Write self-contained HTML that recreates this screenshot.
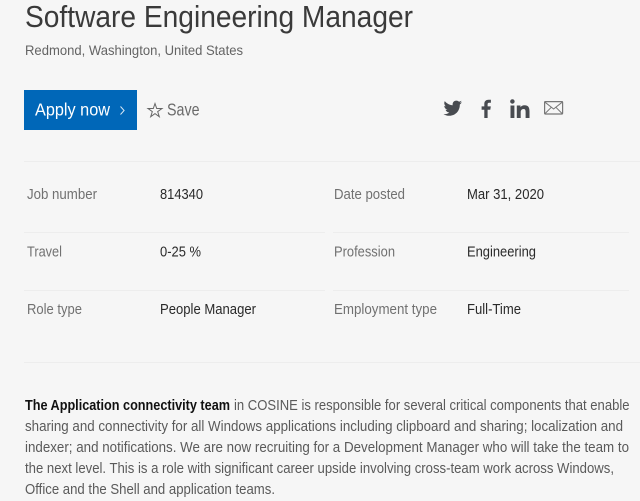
<!DOCTYPE html>
<html lang="en">
<head>
<meta charset="utf-8">
<title>Software Engineering Manager</title>
<style>
html,body{margin:0;padding:0;background:#f6f6f6;width:640px;height:501px;overflow:hidden}
svg{display:block;position:absolute;left:0;top:0}
text{font-family:"Liberation Sans",sans-serif;font-size:14.5px;fill:#5f5f5f}
.v{fill:#2a2a2a}
.l{fill:#717171}
.p{fill:#5a5a5a}
</style>
</head>
<body>
<svg width="640" height="501" viewBox="0 0 640 501" xmlns="http://www.w3.org/2000/svg">
<rect width="640" height="501" fill="#f6f6f6"/>

<text x="25" y="27" style="font-size:31px;fill:#3a3a3a" textLength="388" lengthAdjust="spacingAndGlyphs">Software Engineering Manager</text>
<text x="25" y="55" style="font-size:14px;fill:#646464" textLength="218" lengthAdjust="spacingAndGlyphs">Redmond, Washington, United States</text>

<rect x="24" y="90" width="113" height="40" fill="#0067b8"/>
<text x="35" y="115.500" style="font-size:17.500px;fill:#fff" textLength="75" lengthAdjust="spacingAndGlyphs">Apply now</text>
<path d="M120.500 106.500l3.600 4-3.600 4" fill="none" stroke="#d5e6f4" stroke-width="1"/>

<path d="M155 103.500l1.700 5h5.300l-4.300 3.100 1.600 5.100-4.300-3.100-4.300 3.100 1.600-5.100-4.300-3.100h5.300z" fill="none" stroke="#666" stroke-width="1"/>
<text x="167" y="115.500" style="font-size:17.500px;fill:#6a6a6a" textLength="32.500" lengthAdjust="spacingAndGlyphs">Save</text>

<path d="M462 102.300c-.7.300-1.400.5-2.200.6.800-.5 1.400-1.200 1.700-2.100-.8.400-1.600.8-2.500.9-1.600-1.700-4.500-1.400-5.800.5-.6.900-.7 2-.5 3-3.200-.2-6-1.700-7.900-4.100-1 1.800-.5 4 1.200 5.200-.6 0-1.200-.2-1.700-.5 0 1.900 1.300 3.500 3.100 3.900-.6.200-1.200.2-1.800.1.500 1.600 2 2.700 3.700 2.700-1.700 1.300-3.700 1.900-5.800 1.600 5.400 3.500 12.300 1.200 15-3.900.9-1.700 1.400-3.700 1.300-5.600.7-.6 1.500-1.400 2.200-2.300z" fill="#484b50"/>
<path d="M484.300 118v-8.300h-2.700v-3.300h2.700v-2.400c0-2.900 1.700-4.300 4.200-4.300 1.100 0 2.100.1 2.400.1v2.900h-1.700c-1.300 0-1.600.7-1.600 1.600v2.100h3.200l-.5 3.300h-2.700v8.300z" fill="#484b50"/>
<path d="M510.500 105.500h3.900v12.500h-3.900zM512.400 99.200a2.200 2.200 0 1 1 0 4.500a2.200 2.200 0 0 1 0-4.500zM516.800 105.500h3.700v1.700c.6-1.100 2-2 4-2 4.200 0 5 2.700 5 6.300v6.500h-3.900v-5.800c0-1.400 0-3.200-2-3.200s-2.900 1.500-2.900 3.100v5.900h-3.900z" fill="#484b50"/>
<g fill="none" stroke="#777" stroke-width="1.200">
<rect x="544.600" y="101.600" width="18" height="12.400" rx=".6"/>
<path d="M545 102.200l8.600 6.800 8.600-6.800M545 113.600l6.400-6.400M562.200 113.600l-6.400-6.400" stroke-width="1"/>
</g>

<g fill="#ededed">
<rect x="24" y="161" width="616" height="1"/>
<rect x="24" y="232" width="301" height="1"/>
<rect x="333" y="232" width="296" height="1"/>
<rect x="24" y="290" width="301" height="1"/>
<rect x="333" y="290" width="296" height="1"/>
<rect x="24" y="362" width="616" height="1"/>
</g>

<text class="l" x="27" y="199" textLength="70" lengthAdjust="spacingAndGlyphs">Job number</text>
<text class="v" x="160" y="199" textLength="43" lengthAdjust="spacingAndGlyphs">814340</text>
<text class="l" x="334" y="199" textLength="71" lengthAdjust="spacingAndGlyphs">Date posted</text>
<text class="v" x="467" y="199" textLength="77" lengthAdjust="spacingAndGlyphs">Mar 31, 2020</text>

<text class="l" x="27" y="256.500" textLength="35" lengthAdjust="spacingAndGlyphs">Travel</text>
<text class="v" x="160" y="256.500" textLength="41" lengthAdjust="spacingAndGlyphs">0-25 %</text>
<text class="l" x="334" y="256.500" textLength="61" lengthAdjust="spacingAndGlyphs">Profession</text>
<text class="v" x="467" y="256.500" textLength="69" lengthAdjust="spacingAndGlyphs">Engineering</text>

<text class="l" x="27" y="314" textLength="55" lengthAdjust="spacingAndGlyphs">Role type</text>
<text class="v" x="160" y="314" textLength="96" lengthAdjust="spacingAndGlyphs">People Manager</text>
<text class="l" x="334" y="314" textLength="103" lengthAdjust="spacingAndGlyphs">Employment type</text>
<text class="v" x="467" y="314" textLength="54" lengthAdjust="spacingAndGlyphs">Full-Time</text>

<text x="25" y="410" style="font-weight:700;fill:#111" textLength="205" lengthAdjust="spacingAndGlyphs">The Application connectivity team</text>
<text class="p" x="234" y="410" textLength="395.500" lengthAdjust="spacingAndGlyphs">in COSINE is responsible for several critical components that enable</text>
<text class="p" x="25" y="431" textLength="598" lengthAdjust="spacingAndGlyphs">sharing and connectivity for all Windows applications including clipboard and sharing; localization and</text>
<text class="p" x="25" y="452" textLength="604" lengthAdjust="spacingAndGlyphs">indexer; and notifications. We are now recruiting for a Development Manager who will take the team to</text>
<text class="p" x="25" y="473" textLength="589" lengthAdjust="spacingAndGlyphs">the next level. This is a role with significant career upside involving cross-team work across Windows,</text>
<text class="p" x="25" y="494" textLength="250" lengthAdjust="spacingAndGlyphs">Office and the Shell and application teams.</text>
</svg>
</body>
</html>
